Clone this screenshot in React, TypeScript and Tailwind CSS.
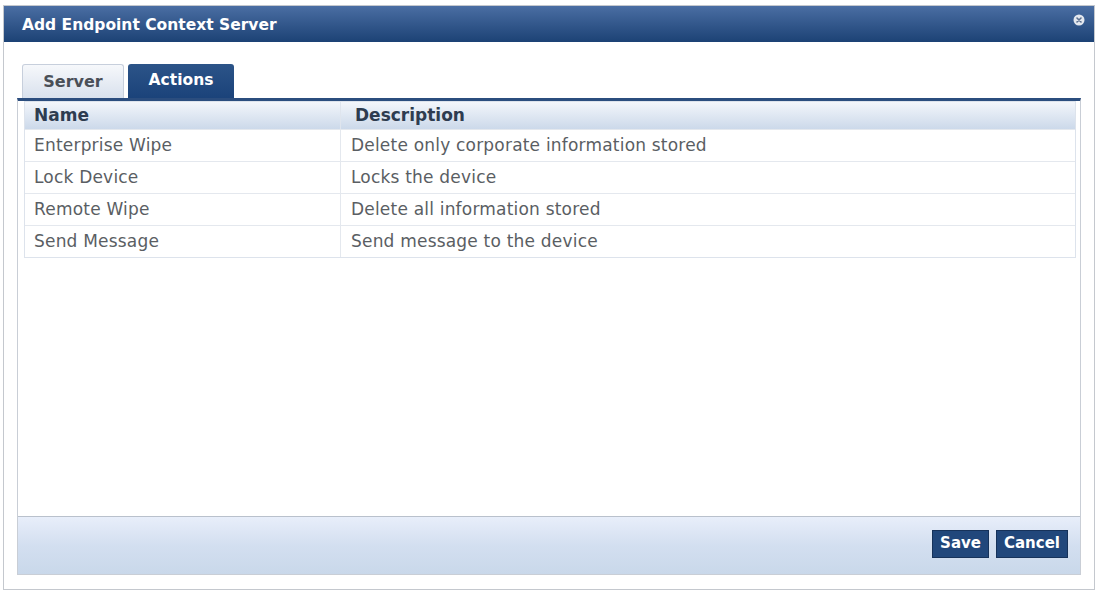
const rows = [
  { name: "Enterprise Wipe", description: "Delete only corporate information stored" },
  { name: "Lock Device", description: "Locks the device" },
  { name: "Remote Wipe", description: "Delete all information stored" },
  { name: "Send Message", description: "Send message to the device" },
];

function CloseIcon() {
  return (
    <svg width="12" height="12" viewBox="0 0 12 12">
      <circle cx="6" cy="6" r="5.5" fill="#e4e8ef" />
      <path d="M4 4 L8 8 M8 4 L4 8" stroke="#5a6f90" strokeWidth="1.6" strokeLinecap="round" />
    </svg>
  );
}

export default function App() {
  return (
    <div className="w-[1098px] h-[592px] bg-white font-['DejaVu_Sans',sans-serif] pt-[5px] pl-[3px] overflow-hidden">
      <div className="w-[1092px] h-[585px] flex flex-col border border-[#c4c8ce] bg-white">
        <div className="h-[36px] shrink-0 flex items-center justify-between pl-[18px] pr-[9px] bg-gradient-to-b from-[#4a6ea3] to-[#1c4275]">
          <span className="text-white font-bold text-[15.5px] mt-[4px]">Add Endpoint Context Server</span>
          <span className="self-start mt-[8px]">
            <CloseIcon />
          </span>
        </div>

        <div className="flex-1 flex flex-col px-[13px] pt-[21px] pb-[14px]">
          <div className="flex items-end gap-[4px] pl-[5px] h-[35px]">
            <div className="w-[102px] h-[34px] flex items-center justify-center rounded-t-[3px] border border-b-0 border-[#c7cfdc] bg-gradient-to-b from-[#f6f8fb] to-[#d9e1ed] text-[#4a4f57] font-bold text-[16px]">
              Server
            </div>
            <div className="w-[106px] h-[34px] flex items-center justify-center rounded-t-[3px] bg-gradient-to-b from-[#2c5488] to-[#1b437a] text-white font-bold text-[15.5px]">
              Actions
            </div>
          </div>

          <div className="flex-1 flex flex-col border-t-[3px] border-t-[#2b4d7e] border-x border-b border-[#c9ced6]">
            <div className="flex-1 pl-[6px] pr-[4px]">
              <div className="border border-[#dde3ec]">
                <div className="flex h-[27px] bg-gradient-to-b from-[#f3f6fb] to-[#ccd9ea] text-[#2e3c50] font-bold text-[17px]">
                  <div className="w-[316px] flex items-center pl-[9px] border-r border-[#dfe5ee]">Name</div>
                  <div className="flex-1 flex items-center pl-[14px]">Description</div>
                </div>
                {rows.map((row) => (
                  <div key={row.name} className="flex h-[32px] border-t border-[#e4e8ee] text-[#5a5e63] text-[17px] tracking-[0.2px]">
                    <div className="w-[316px] flex items-center pl-[9px] border-r border-[#e4e8ee]">{row.name}</div>
                    <div className="flex-1 flex items-center pl-[10px]">{row.description}</div>
                  </div>
                ))}
              </div>
            </div>

            <div className="h-[58px] shrink-0 flex items-center justify-end gap-[7px] pr-[12px] pb-[4px] border-t border-[#b9c1cc] bg-gradient-to-b from-[#e8eefa] via-[#d3dff0] to-[#c9d8ea]">
              <button className="h-[28px] px-[7px] bg-[#21477b] text-white font-bold text-[15px] border border-[#16325a]">Save</button>
              <button className="h-[28px] px-[7px] bg-[#21477b] text-white font-bold text-[15px] border border-[#16325a]">Cancel</button>
            </div>
          </div>
        </div>
      </div>
    </div>
  );
}
